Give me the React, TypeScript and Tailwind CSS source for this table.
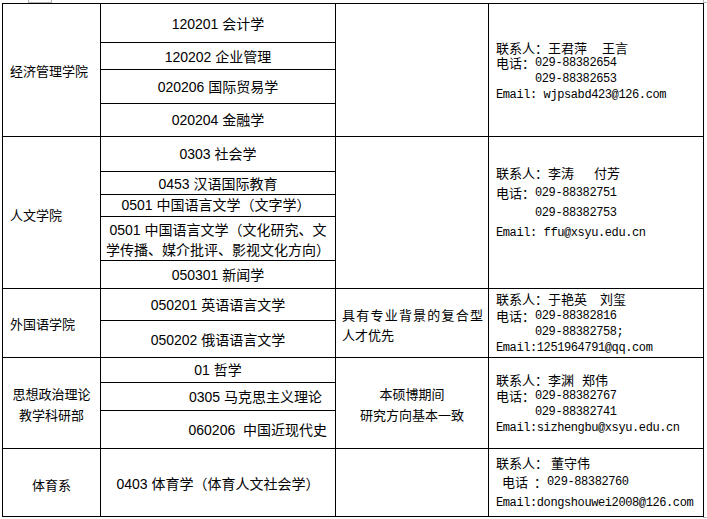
import React from "react";

const CJK = "font-['Noto_Sans_CJK_SC',sans-serif]";
const MONO = "font-['Liberation_Mono',monospace] text-[12px] leading-[14px] tracking-[-0.4px] whitespace-pre";
const MAJOR = "font-['Liberation_Sans','Noto_Sans_CJK_SC',sans-serif] text-[14px]";

function Sp({ w }: { w: string }) {
  return <span className={`inline-block ${w}`} />;
}

export default function App() {
  return (
    <div className="relative h-[519px] w-[707px] overflow-hidden bg-white text-black">
      <div className="absolute left-[28px] top-0 h-[3px] w-[24px] border-x border-b border-[#b4b4b4]" />
      <div className="absolute left-[703px] top-0 h-[3px] w-[4px] border-l border-b border-[#b4b4b4]" />
      <div className="absolute left-[703px] top-[517px] h-px w-[4px] bg-[#b4b4b4]" />

      <div className="ml-[2px] pt-[3px]">
        <div className="grid w-[702px] grid-cols-[97px_234px_152px_214px] grid-rows-[38px_26px_33px_32px_34px_22px_21px_43px_27px_31px_36px_24px_27px_37px_67px] gap-px bg-black p-px">
          {/* Column 1 */}
          <div className={`col-start-1 row-[1/span_4] flex items-center bg-white pl-[7px] pt-[2px] text-[13px] ${CJK}`}>经济管理学院</div>
          <div className={`col-start-1 row-[5/span_5] flex items-center bg-white pl-[7px] pt-[4px] text-[13px] ${CJK}`}>人文学院</div>
          <div className={`col-start-1 row-[10/span_2] flex items-center bg-white pl-[7px] pt-[2px] text-[13px] ${CJK}`}>外国语学院</div>
          <div className={`col-start-1 row-[12/span_3] flex flex-col items-center justify-center bg-white pt-[1px] text-[13px] leading-[21px] ${CJK}`}>
            <div>思想政治理论</div>
            <div>教学科研部</div>
          </div>
          <div className={`col-start-1 row-start-15 flex items-center justify-center bg-white pt-[4px] text-[13px] ${CJK}`}>体育系</div>

          {/* Column 2 */}
          <div className={`col-start-2 row-start-1 flex items-center justify-center bg-white pt-[2px] ${MAJOR}`}>120201 会计学</div>
          <div className={`col-start-2 row-start-2 flex items-center justify-center bg-white pt-[2px] ${MAJOR}`}>120202 企业管理</div>
          <div className={`col-start-2 row-start-3 flex items-center justify-center bg-white pt-[1px] ${MAJOR}`}>020206 国际贸易学</div>
          <div className={`col-start-2 row-start-4 flex items-center justify-center bg-white pt-[1px] ${MAJOR}`}>020204 金融学</div>
          <div className={`col-start-2 row-start-5 flex items-center justify-center bg-white pt-[1px] ${MAJOR}`}>0303 社会学</div>
          <div className={`col-start-2 row-start-6 flex items-center justify-center bg-white pt-[2px] ${MAJOR}`}>0453 汉语国际教育</div>
          <div className={`col-start-2 row-start-7 flex items-center justify-center bg-white pr-[4px] ${MAJOR}`}>0501 中国语言文学（文字学）</div>
          <div className={`col-start-2 row-start-8 flex flex-col items-center justify-center whitespace-nowrap bg-white pt-[3px] leading-[20px] ${MAJOR}`}>
            <div>0501 中国语言文学（文化研究、文</div>
            <div>学传播、媒介批评、影视文化方向）</div>
          </div>
          <div className={`col-start-2 row-start-9 flex items-center justify-center bg-white pt-[1px] ${MAJOR}`}>050301 新闻学</div>
          <div className={`col-start-2 row-start-10 flex items-center justify-center bg-white pt-[1px] ${MAJOR}`}>050201 英语语言文学</div>
          <div className={`col-start-2 row-start-11 flex items-center justify-center bg-white pt-[2px] ${MAJOR}`}>050202 俄语语言文学</div>
          <div className={`col-start-2 row-start-12 flex items-center justify-center bg-white pt-[1px] ${MAJOR}`}>01 哲学</div>
          <div className={`col-start-2 row-start-13 flex items-center justify-end bg-white pr-[13px] pt-[1px] ${MAJOR}`}>0305 马克思主义理论</div>
          <div className={`col-start-2 row-start-14 flex items-center justify-end bg-white pr-[8px] pt-[2px] ${MAJOR}`}>
            <span className="whitespace-pre">060206  中国近现代史</span>
          </div>
          <div className={`col-start-2 row-start-15 flex items-center justify-center bg-white pt-[4px] ${MAJOR}`}>0403 体育学（体育人文社会学）</div>

          {/* Column 3 */}
          <div className="col-start-3 row-[1/span_4] bg-white" />
          <div className="col-start-3 row-[5/span_5] bg-white" />
          <div className={`col-start-3 row-[10/span_2] flex items-center bg-white pl-[6px] pr-[5px] pt-[3px] text-[13px] leading-[20px] ${CJK}`}>
            <p className="w-full text-justify">具有专业背景的复合型人才优先</p>
          </div>
          <div className={`col-start-3 row-[12/span_3] flex flex-col items-center justify-center bg-white pt-[1px] text-[13px] leading-[21px] ${CJK}`}>
            <div>本硕博期间</div>
            <div>研究方向基本一致</div>
          </div>
          <div className="col-start-3 row-start-15 bg-white" />

          {/* Column 4 */}
          <div className={`col-start-4 row-[1/span_4] flex flex-col whitespace-nowrap bg-white pl-[7px] pt-[36px] text-[13px] leading-[14px] ${CJK}`}>
            <div className="flex h-[15px] items-center">联系人：王君萍<Sp w="w-[15px]" />王言</div>
            <div className="flex h-[16px] items-center">电话：<span className={MONO}>029-88382654</span></div>
            <div className="flex h-[16px] items-center pl-[39px]"><span className={MONO}>029-88382653</span></div>
            <div className="flex h-[16px] items-center"><span className={MONO}>Email: wjpsabd423@126.com</span></div>
          </div>
          <div className={`col-start-4 row-[5/span_5] flex flex-col whitespace-nowrap bg-white pl-[7px] pt-[25px] text-[13px] leading-[14px] ${CJK}`}>
            <div className="flex h-[21px] items-center">联系人：李涛<Sp w="w-[20px]" />付芳</div>
            <div className="flex h-[20px] items-center">电话：<span className={MONO}>029-88382751</span></div>
            <div className="flex h-[20px] items-center pl-[39px]"><span className={MONO}>029-88382753</span></div>
            <div className="flex h-[20px] items-center"><span className={MONO}>Email: ffu@xsyu.edu.cn</span></div>
          </div>
          <div className={`col-start-4 row-[10/span_2] flex flex-col whitespace-nowrap bg-white pl-[7px] pt-[2px] text-[13px] leading-[14px] ${CJK}`}>
            <div className="flex h-[16px] items-center">联系人：于艳英<Sp w="w-[13px]" />刘玺</div>
            <div className="flex h-[17px] items-center">电话：<span className={MONO}>029-88382816</span></div>
            <div className="flex h-[16px] items-center pl-[39px]"><span className={MONO}>029-88382758;</span></div>
            <div className="flex h-[16px] items-center"><span className={MONO}>Email:1251964791@qq.com</span></div>
          </div>
          <div className={`col-start-4 row-[12/span_3] flex flex-col whitespace-nowrap bg-white pl-[7px] pt-[14px] text-[13px] leading-[14px] ${CJK}`}>
            <div className="flex h-[16px] items-center">联系人：李渊<Sp w="w-[8px]" />郑伟</div>
            <div className="flex h-[16px] items-center">电话：<span className={MONO}>029-88382767</span></div>
            <div className="flex h-[16px] items-center pl-[39px]"><span className={MONO}>029-88382741</span></div>
            <div className="flex h-[16px] items-center"><span className={MONO}>Email:sizhengbu@xsyu.edu.cn</span></div>
          </div>
          <div className={`col-start-4 row-start-15 flex flex-col whitespace-nowrap bg-white pl-[7px] pt-[5px] text-[13px] leading-[14px] ${CJK}`}>
            <div className="flex h-[18px] items-center">联系人：<Sp w="w-[3px]" />董守伟</div>
            <div className="flex h-[19px] items-center pl-[6px]">电话<Sp w="w-[6px]" />：<span className={MONO}>029-88382760</span></div>
            <div className="flex h-[24px] items-center"><span className={MONO}>Email:dongshouwei2008@126.com</span></div>
          </div>
        </div>
      </div>
    </div>
  );
}
